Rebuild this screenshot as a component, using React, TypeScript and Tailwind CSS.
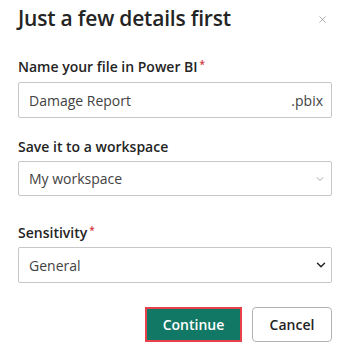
import { ChevronDown, X } from "lucide-react";

function Label({ text, required }: { text: string; required?: boolean }) {
  return (
    <div className="text-[14px] leading-[20px] font-semibold text-[#242424]">
      {text}
      {required && (
        <span className="ml-[2px] text-[#d13438] relative -top-[4px] text-[10px]">*</span>
      )}
    </div>
  );
}

export default function App() {
  return (
    <div
      className="w-[350px] h-[354px] bg-white px-[18px] pt-[3px]"
      style={{ fontFamily: '"Open Sans", "Noto Sans", sans-serif' }}
    >
      {/* Header */}
      <div className="flex items-center justify-between h-[32px]">
        <h2 className="text-[21px] font-semibold text-[#242424] tracking-[-0.2px]">
          Just a few details first
        </h2>
        <X className="w-[11px] h-[11px] text-[#757575] mr-[4px]" strokeWidth={1.25} />
      </div>

      {/* File name */}
      <div className="mt-[22px]">
        <Label text="Name your file in Power BI" required />
        <div className="mt-[4px] h-[36px] border border-[#c7c7c7] rounded-[2px] flex items-center justify-between px-[10px] text-[14px] text-[#424242]">
          <span>Damage Report</span>
          <span className="-mr-[2px]">.pbix</span>
        </div>
      </div>

      {/* Workspace */}
      <div className="mt-[19px]">
        <Label text="Save it to a workspace" />
        <div className="mt-[4px] h-[35px] border border-[#c7c7c7] rounded-[2px] flex items-center justify-between pl-[10px] pr-[5px] text-[14px] text-[#424242]">
          <span>My workspace</span>
          <ChevronDown className="w-[12px] h-[12px] text-[#8a8a8a]" strokeWidth={1.5} />
        </div>
      </div>

      {/* Sensitivity */}
      <div className="mt-[27px]">
        <Label text="Sensitivity" required />
        <div className="mt-[3px] h-[36px] border border-[#c7c7c7] rounded-[2px] flex items-center justify-between pl-[10px] pr-[3px] text-[14px] text-[#424242]">
          <span>General</span>
          <ChevronDown className="w-[14px] h-[14px] text-[#242424]" strokeWidth={2.5} />
        </div>
      </div>

      {/* Actions */}
      <div className="mt-[24px] flex justify-end gap-[10px]">
        <button className="h-[35px] w-[97px] bg-[#117865] border-2 border-[#e8414a] text-white text-[14px] font-semibold">
          Continue
        </button>
        <button className="h-[35px] w-[80px] bg-white border border-[#b3b3b3] rounded-[4px] text-[#242424] text-[14px] font-semibold">
          Cancel
        </button>
      </div>
    </div>
  );
}
